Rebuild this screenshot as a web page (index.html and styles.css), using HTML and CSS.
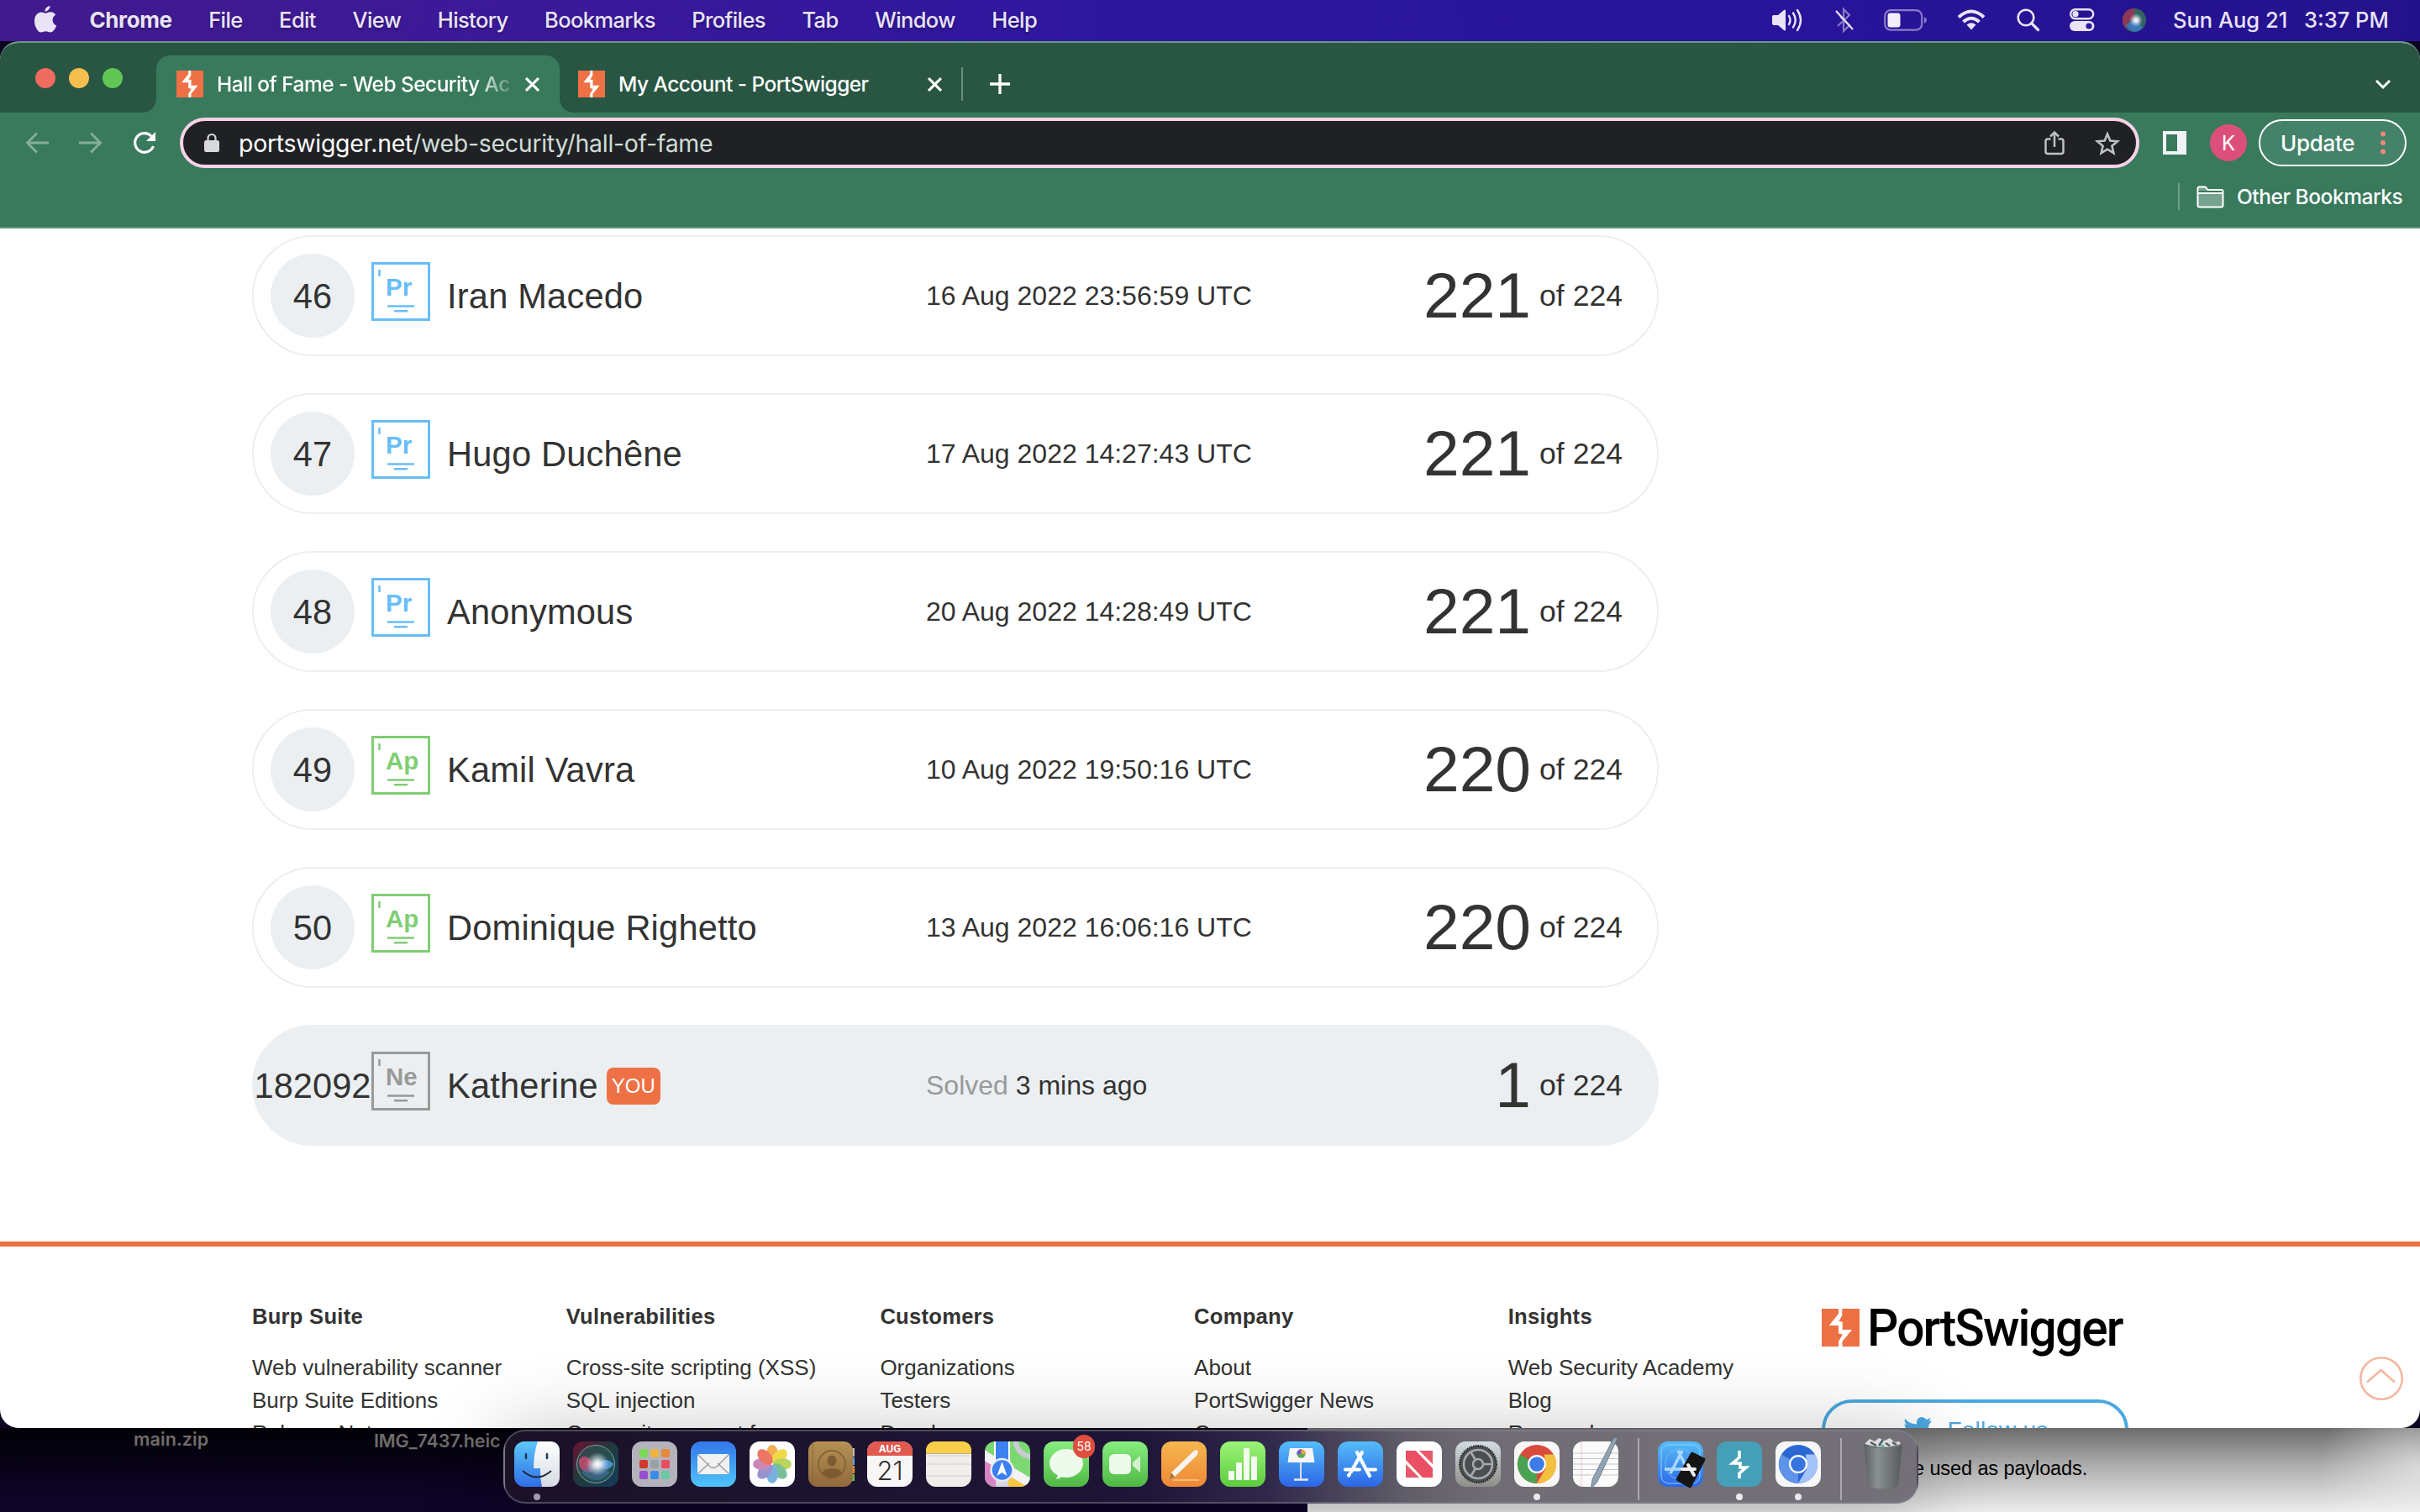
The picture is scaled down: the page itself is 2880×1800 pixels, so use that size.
FILE: index.html
```html
<!DOCTYPE html>
<html lang="en">
<head>
<meta charset="utf-8">
<title>Hall of Fame - Web Security Academy</title>
<link rel="stylesheet" href="styles.css">
</head>
<body>
<svg width="0" height="0" class="defs" aria-hidden="true">
  <defs>
    <symbol id="bolt" viewBox="0 0 45 45">
      <rect width="45" height="45" fill="#ee7045"/>
      <path fill="#fff" d="M20 0h4.300v8L20.300 15l4.400.5V25H36L24.500 39v6H20v-6l5-8.500-5-1V20H8.700L20 6z"/>
    </symbol>
    <symbol id="x" viewBox="0 0 16 16"><path d="M1 1l14 14M15 1L1 15" stroke="#fff" stroke-width="2.900" fill="none"/></symbol>
    <symbol id="lines" viewBox="0 0 70 70"><rect x="1.500" y="1.500" width="67" height="67" fill="none" stroke="currentColor" stroke-width="3"/><path d="M9.500 9v8" stroke="currentColor" stroke-width="2.500"/><path d="M19 52.500h32M27 58.300h16" stroke="currentColor" stroke-width="2.600"/></symbol>
    <linearGradient id="gBlue" x2="0" y2="1"><stop stop-color="#3476ea"/><stop offset="1" stop-color="#4fc4f8"/></linearGradient>
    <linearGradient id="gGreen" x2="0" y2="1"><stop stop-color="#86ee80"/><stop offset="1" stop-color="#50b945"/></linearGradient>
    <linearGradient id="gLime" x2="0" y2="1"><stop stop-color="#9af477"/><stop offset="1" stop-color="#5dcc3e"/></linearGradient>
    <linearGradient id="gOrange" x2="0" y2="1"><stop stop-color="#f6b64e"/><stop offset="1" stop-color="#ef8836"/></linearGradient>
    <linearGradient id="gSky" x2="0" y2="1"><stop stop-color="#55bdf9"/><stop offset="1" stop-color="#2c66e6"/></linearGradient>
    <linearGradient id="gFace" x2="0" y2="1"><stop stop-color="#5cc8f8"/><stop offset="1" stop-color="#2f6de8"/></linearGradient>
    <linearGradient id="gWhite" x2="0" y2="1"><stop stop-color="#fff"/><stop offset="1" stop-color="#d5dbe2"/></linearGradient>
    <linearGradient id="gTan" x2="0" y2="1"><stop stop-color="#b59154"/><stop offset="1" stop-color="#91693b"/></linearGradient>
    <linearGradient id="gSiri" x2="1" y2="1"><stop stop-color="#6b1230"/><stop offset=".5" stop-color="#1e3b3e"/><stop offset="1" stop-color="#123a5c"/></linearGradient>
    <linearGradient id="gGear" x2="0" y2="1"><stop stop-color="#d3dde3"/><stop offset="1" stop-color="#8f8d88"/></linearGradient>
    <linearGradient id="gBin" x2="1" y2="0"><stop stop-color="#5a5f61"/><stop offset=".35" stop-color="#8a9091"/><stop offset="1" stop-color="#55595b"/></linearGradient>
    <radialGradient id="gOrb"><stop stop-color="#fff"/><stop offset=".3" stop-color="#fff" stop-opacity=".8"/><stop offset="1" stop-color="#cfe3f8" stop-opacity="0"/></radialGradient>
  </defs>
</svg>

<header class="menubar">
  <nav class="menus">
    <svg class="apple" width="28" height="34" viewBox="0 0 28 34"><path fill="#e9e3f5" d="M19.500 1c.2 3.600-3 6.800-6 6.600C13.100 4.300 16.500 1.200 19.500 1zM14.200 9.700c1.600 0 3.200-1.500 5.900-1.500 2.300 0 4.700 1.200 6.200 3.300-5.500 3.200-4.600 10.900.9 13.100-1.200 3.300-4.100 7.900-7 7.900-2.200 0-3.200-1.300-5.800-1.300-2.700 0-3.800 1.300-5.900 1.300C5.300 32.500 1 25.700 1 19.200 1 12.300 5.300 8.500 9.200 8.500c2.200 0 3.700 1.200 5 1.200z"/></svg>
    <b>Chrome</b><span>File</span><span>Edit</span><span>View</span><span>History</span><span>Bookmarks</span><span>Profiles</span><span>Tab</span><span>Window</span><span>Help</span>
  </nav>
  <div class="status">
    <svg width="38" height="28" viewBox="0 0 38 28"><path fill="#e9e3f5" d="M1 10q0-2 2-2h5l7-6q2-1.500 2 1v22q0 2.500-2 1l-7-6H3q-2 0-2-2z"/><path d="M21 9q3 5 0 10M26 5.500q5.500 8.500 0 17M31 2q8 12 0 24" fill="none" stroke="#e9e3f5" stroke-width="2.400" stroke-linecap="round"/></svg>
    <svg class="bt" width="22" height="30" viewBox="0 0 22 30"><path d="M3 22l14-13-7-7v26l7-7L6 11" fill="none" stroke="#8a7bc8" stroke-width="2.200"/><path d="M1 4l20 22" stroke="#e9e3f5" stroke-width="2.200"/></svg>
    <svg class="batt" width="52" height="26" viewBox="0 0 52 26"><rect x="1.200" y="1.200" width="44" height="23.500" rx="7" fill="none" stroke="#8a7bc8" stroke-width="2.200"/><rect x="4.500" y="4.500" width="15" height="17" rx="3" fill="#f3effa"/><path d="M48 9q3 1.500 3 4t-3 4z" fill="#8a7bc8"/></svg>
    <svg class="wifi" width="34" height="25" viewBox="0 0 34 25"><path d="M2 9.500q15-14 30 0M7.500 15q9.500-8.500 19 0" fill="none" stroke="#e9e3f5" stroke-width="4"/><path d="M11.500 18.500q5.500-4.500 11 0L17 24.500z" fill="#e9e3f5"/></svg>
    <svg class="mag" width="27" height="27" viewBox="0 0 27 27"><circle cx="11" cy="11" r="9.300" fill="none" stroke="#e9e3f5" stroke-width="2.600"/><path d="M17.500 17.500l8 8" stroke="#e9e3f5" stroke-width="3.200" stroke-linecap="round"/></svg>
    <svg class="cc" width="30" height="27" viewBox="0 0 30 27"><rect x="1.200" y="1.200" width="27" height="11" rx="5.500" fill="none" stroke="#e9e3f5" stroke-width="2.400"/><circle cx="7" cy="6.700" r="3.600" fill="#e9e3f5"/><rect x="0" y="15" width="29.500" height="12" rx="6" fill="#e9e3f5"/><circle cx="23" cy="21" r="3.600" fill="#2a169c"/></svg>
    <svg class="siri" width="28" height="28" viewBox="0 0 28 28"><circle cx="14" cy="14" r="14" fill="#33635f"/><path d="M14 0A14 14 0 0 0 4 24q4-12 10-10z" fill="#8c3856"/><path d="M4 20q8-8 14-5l6 8Q13 34 4 20z" fill="#3c76b8"/><circle cx="16" cy="14" r="8" fill="url(#gOrb)"/></svg>
    <span class="date">Sun Aug 21</span><span class="time">3:37 PM</span>
  </div>
</header>

<main class="window">
  <div class="tabstrip">
    <div class="lights"><i class="red"></i><i class="yellow"></i><i class="green"></i></div>
    <div class="tab active"><svg class="fav"><use href="#bolt"/></svg><span class="title fade">Hall of Fame - Web Security Ac</span><svg class="close"><use href="#x"/></svg></div>
    <div class="tab"><svg class="fav"><use href="#bolt"/></svg><span class="title">My Account - PortSwigger</span><svg class="close"><use href="#x"/></svg></div>
    <i class="tabsep"></i>
    <svg class="plus" width="24" height="24" viewBox="0 0 24 24"><path d="M12 0v24M0 12h24" stroke="#fff" stroke-width="3.400"/></svg>
    <svg class="chev" width="20" height="12" viewBox="0 0 20 12"><path d="M2 2l8 8 8-8" fill="none" stroke="#fff" stroke-width="3"/></svg>
  </div>
  <div class="toolbar">
    <svg class="back" width="28" height="26" viewBox="0 0 28 26"><path d="M28 13H3M14 1.500L2.500 13 14 24.500" fill="none" stroke="#85ae9b" stroke-width="2.800"/></svg>
    <svg class="fwd" width="28" height="26" viewBox="0 0 28 26"><path d="M0 13h25M14 1.500L25.500 13 14 24.500" fill="none" stroke="#85ae9b" stroke-width="2.800"/></svg>
    <svg class="reload" width="28" height="28" viewBox="0 0 28 28"><path d="M24.500 18A11.300 11.300 0 1 1 22 6" fill="none" stroke="#fff" stroke-width="3.200"/><path d="M27 1v11H16z" fill="#fff"/></svg>
    <div class="omnibox">
      <svg class="lock" width="18" height="22" viewBox="0 0 18 22"><rect y="8" width="18" height="14" rx="2.500" fill="#d6d8da"/><path d="M4.500 9V5.500a4.500 4.500 0 0 1 9 0V9" fill="none" stroke="#d6d8da" stroke-width="2.200"/></svg>
      <span class="url">portswigger.net<em>/web-security/hall-of-fame</em></span>
      <svg class="share" width="24" height="30" viewBox="0 0 24 30"><path d="M7.500 10.500H4a2.500 2.500 0 0 0-2.500 2.500v12.500A2.500 2.500 0 0 0 4 28h16a2.500 2.500 0 0 0 2.500-2.500V13a2.500 2.500 0 0 0-2.500-2.500h-3.500M12 20V3M7 7.500l5-5 5 5" fill="none" stroke="#bdc1c0" stroke-width="2.500"/></svg>
      <svg class="star" width="30" height="29" viewBox="0 0 30 29"><path d="M15 3.500l3.300 8 8.700.7-6.600 5.600 2 8.400L15 21.700l-7.400 4.500 2-8.400L3 12.200l8.700-.7z" fill="none" stroke="#bdc1c0" stroke-width="2.600"/></svg>
    </div>
    <svg class="panel" width="28" height="28" viewBox="0 0 28 28"><rect x="2" y="2" width="24" height="24" fill="none" stroke="#eef3f5" stroke-width="4"/><rect x="17" width="11" height="28" fill="#eef3f5"/></svg>
    <span class="avatar">K</span>
    <span class="update"><span>Update</span><svg width="6" height="28" viewBox="0 0 6 28"><g fill="#ec8a78"><circle cx="3" cy="3.500" r="3"/><circle cx="3" cy="14" r="3"/><circle cx="3" cy="24.500" r="3"/></g></svg></span>
  </div>
  <div class="bookmarks">
    <i></i>
    <svg width="33" height="27" viewBox="0 0 33 27"><path d="M1.500 3.500q0-2 2-2h7l3 3.500h16q2 0 2 2v16.500q0 2-2 2h-26q-2 0-2-2z" fill="#75a38f" stroke="#fff" stroke-width="2"/><path d="M2.500 6h28v3h-28z" fill="#397a5d"/><path d="M1.500 9h30" stroke="#fff" stroke-width="2"/></svg>
    <span>Other Bookmarks</span>
  </div>

  <section class="page">
    <div class="rows">
      <article class="row"><span class="rank">46</span><span class="level pr"><svg><use href="#lines"/></svg><b>Pr</b></span><span class="name">Iran Macedo</span><span class="when">16 Aug 2022 23:56:59 UTC</span><span class="score">221</span><span class="of">of 224</span></article>
      <article class="row"><span class="rank">47</span><span class="level pr"><svg><use href="#lines"/></svg><b>Pr</b></span><span class="name">Hugo Duchêne</span><span class="when">17 Aug 2022 14:27:43 UTC</span><span class="score">221</span><span class="of">of 224</span></article>
      <article class="row"><span class="rank">48</span><span class="level pr"><svg><use href="#lines"/></svg><b>Pr</b></span><span class="name">Anonymous</span><span class="when">20 Aug 2022 14:28:49 UTC</span><span class="score">221</span><span class="of">of 224</span></article>
      <article class="row"><span class="rank">49</span><span class="level ap"><svg><use href="#lines"/></svg><b>Ap</b></span><span class="name">Kamil Vavra</span><span class="when">10 Aug 2022 19:50:16 UTC</span><span class="score">220</span><span class="of">of 224</span></article>
      <article class="row"><span class="rank">50</span><span class="level ap"><svg><use href="#lines"/></svg><b>Ap</b></span><span class="name">Dominique Righetto</span><span class="when">13 Aug 2022 16:06:16 UTC</span><span class="score">220</span><span class="of">of 224</span></article>
      <article class="row me"><span class="rank">182092</span><span class="level ne"><svg><use href="#lines"/></svg><b>Ne</b></span><span class="name">Katherine<mark>YOU</mark></span><span class="when"><em>Solved</em> 3 mins ago</span><span class="score">1</span><span class="of">of 224</span></article>
    </div>
    <footer class="footer">
      <div class="col"><h3>Burp Suite</h3><a>Web vulnerability scanner</a><a>Burp Suite Editions</a><a>Release Notes</a></div>
      <div class="col"><h3>Vulnerabilities</h3><a>Cross-site scripting (XSS)</a><a>SQL injection</a><a>Cross-site request forgery</a></div>
      <div class="col"><h3>Customers</h3><a>Organizations</a><a>Testers</a><a>Developers</a></div>
      <div class="col"><h3>Company</h3><a>About</a><a>PortSwigger News</a><a>Careers</a></div>
      <div class="col"><h3>Insights</h3><a>Web Security Academy</a><a>Blog</a><a>Research</a></div>
      <div class="brand">
        <div class="logo"><svg width="45" height="45"><use href="#bolt"/></svg><span>PortSwigger</span></div>
        <div class="follow"><svg width="33" height="28" viewBox="0 0 33 28"><path fill="#4aa8e0" d="M1 2q6 6.500 14 6.500C14-1 23-2 26.500 3L32 1l-2.500 4L33 4.500 29.500 9C29 26 11 31 0 24q6 0 9-3-5-1-6-5h3Q1 14 .5 8.500L3.500 9Q-.5 6 1 2z"/></svg><span>Follow us</span></div>
      </div>
    </footer>
    <svg class="top" width="52" height="52" viewBox="0 0 52 52"><circle cx="26" cy="26" r="24.700" fill="none" stroke="#f7b7a0" stroke-width="2.600"/><path d="M9 30.500L25.500 16 42 30.500" fill="none" stroke="#f7b7a0" stroke-width="2.800"/></svg>
  </section>
</main>

<section class="desktop">
  <div class="left"><span class="file1">main.zip</span><span class="file2">IMG_7437.heic</span></div>
  <div class="right"><span>e used as payloads.</span></div>
</section>

<nav class="dock">
  <span class="app on"><svg viewBox="0 0 54 54"><rect width="54" height="54" rx="12" fill="url(#gFace)"/><path d="M28 0h14q12 0 12 12v30q0 12-12 12h-9q-2-8-2-22h-8Q23 14 28 0z" fill="url(#gWhite)"/><path d="M14 15v5M39 15v5" stroke="#223f5c" stroke-width="2.600" stroke-linecap="round"/><path d="M10 35q17 15 34 0" fill="none" stroke="#1d2b3b" stroke-width="1.800"/></svg></span>
  <span class="app"><svg viewBox="0 0 54 54"><rect width="54" height="54" rx="12" fill="url(#gSiri)"/><circle cx="27" cy="27" r="22.500" fill="#2c5c5a" fill-opacity=".6" stroke="#7ba59b" stroke-width="1"/><path d="M7 22q8-10 16 4l6 2q-8 14-18 6-5-5-4-12z" fill="#d2496f" opacity=".8"/><path d="M29 27q10-10 19 0-9 13-19 0z" fill="#4f9de0" opacity=".85"/><path d="M10 37q18-22 34 0-16 18-34 0z" fill="#4876a8" opacity=".55"/><circle cx="29" cy="27" r="14" fill="url(#gOrb)"/></svg></span>
  <span class="app"><svg viewBox="0 0 54 54"><rect width="54" height="54" rx="12" fill="#b4b3bb"/><g><rect x="9" y="9" width="10" height="10" rx="2" fill="#78d957"/><rect x="22" y="9" width="10" height="10" rx="2" fill="#f0b33e"/><rect x="35" y="9" width="10" height="10" rx="2" fill="#e5883a"/><rect x="9" y="22" width="10" height="10" rx="2" fill="#cf3a30"/><rect x="22" y="22" width="10" height="10" rx="2" fill="#9aa1a6"/><rect x="35" y="22" width="10" height="10" rx="2" fill="#ea4d61"/><rect x="9" y="35" width="10" height="10" rx="2" fill="#9450cf"/><rect x="22" y="35" width="10" height="10" rx="2" fill="#3b8de9"/><rect x="35" y="35" width="10" height="10" rx="2" fill="#6bcaa4"/></g></svg></span>
  <span class="app"><svg viewBox="0 0 54 54"><rect width="54" height="54" rx="12" fill="url(#gBlue)"/><rect x="8" y="15" width="38" height="24" rx="2.500" fill="#f1f1f1"/><path d="M9 38l13-12M45 38L32 26M9 16l14 14q4 3 8 0l14-14" fill="none" stroke="#9a9a9a" stroke-width="1.300"/></svg></span>
  <span class="app"><svg viewBox="0 0 54 54"><rect width="54" height="54" rx="12" fill="#fdfdfd"/><g opacity=".88"><ellipse cx="27" cy="15" rx="7" ry="11" fill="#f2a33b"/><ellipse cx="27" cy="15" rx="7" ry="11" fill="#f0d32e" transform="rotate(45 27 27)"/><ellipse cx="27" cy="15" rx="7" ry="11" fill="#b0cf4a" transform="rotate(90 27 27)"/><ellipse cx="27" cy="15" rx="7" ry="11" fill="#69b98a" transform="rotate(135 27 27)"/><ellipse cx="27" cy="15" rx="7" ry="11" fill="#69a8dc" transform="rotate(180 27 27)"/><ellipse cx="27" cy="15" rx="7" ry="11" fill="#8a85c8" transform="rotate(225 27 27)"/><ellipse cx="27" cy="15" rx="7" ry="11" fill="#c379ae" transform="rotate(270 27 27)"/><ellipse cx="27" cy="15" rx="7" ry="11" fill="#ea6350" transform="rotate(315 27 27)"/></g></svg></span>
  <span class="app"><svg viewBox="0 0 54 54"><path d="M50 8h5v10h-5z" fill="#bbb"/><path d="M50 19h5v9h-5z" fill="#55a9e8"/><path d="M50 29h5v9h-5z" fill="#ef8e35"/><path d="M50 39h5v8h-5z" fill="#61c454"/><rect width="53" height="54" rx="11" fill="url(#gTan)"/><path d="M5 2v50" stroke="#8b6537" stroke-width="1"/><circle cx="28" cy="27" r="16" fill="none" stroke="#7d5b32" stroke-width="1.300"/><ellipse cx="28" cy="23" rx="5.500" ry="6.500" fill="#7d5b32"/><path d="M16 38q3-6 12-6t12 6q-5 6-12 6t-12-6z" fill="#7d5b32"/></svg></span>
  <span class="app cal"><b>AUG</b><span>21</span></span>
  <span class="app"><svg viewBox="0 0 54 54"><rect width="54" height="54" rx="12" fill="#f0eeea"/><path d="M0 14v-2Q0 0 12 0h30q12 0 12 12v2z" fill="#f8ce48"/><path d="M0 14.500h54" stroke="#b6b09e"/><path d="M2 17h50" stroke="#b8b4aa" stroke-dasharray="1 1"/><path d="M0 27h54M0 41h54" stroke="#cfccd2"/></svg></span>
  <span class="app"><svg viewBox="0 0 54 54"><clipPath id="cm"><rect width="54" height="54" rx="12"/></clipPath><g clip-path="url(#cm)"><path fill="#7cd873" d="M0 0h54v54H0z"/><path fill="#d883c4" d="M0 22l14 8v24H0z"/><path fill="#f3c743" d="M28 40l26 14H28z"/><path d="M-3 15L58 52" stroke="#f3f3f5" stroke-width="11"/><path d="M13 24h15v30H13z" fill="#d7d7de"/><path d="M13 0h15v30H13z" fill="#3c82f0"/><path d="M12 0v30M29 0v30" stroke="#fff" stroke-width="2"/><path d="M36-3q2 20 22 22" stroke="#c9cbd4" stroke-width="6" fill="none"/><circle cx="20.500" cy="34" r="13" fill="#3b80ee" stroke="#e8ebf0" stroke-width="2.500"/><path d="M20.500 24l6 17-6-4-6 4z" fill="#fff"/></g></svg></span>
  <span class="app"><svg viewBox="0 0 54 54"><rect width="54" height="54" rx="12" fill="url(#gGreen)"/><path d="M27 9c11 0 20 7.500 20 17S38 43 27 43q-3 0-6-.8-2 2.800-6.500 2.300 2.500-2 2-4.500C10.500 37 7 32 7 26 7 16.500 16 9 27 9z" fill="#eefaec"/></svg><i class="count">58</i></span>
  <span class="app"><svg viewBox="0 0 54 54"><rect width="54" height="54" rx="12" fill="url(#gGreen)"/><rect x="8" y="15" width="26" height="24" rx="6" fill="#eefaec"/><path d="M36 25l9-8v20l-9-8z" fill="#d5efcf"/></svg></span>
  <span class="app"><svg viewBox="0 0 54 54"><rect width="54" height="54" rx="12" fill="url(#gOrange)"/><path d="M9 46l3-9 27-26q4-2 5 1-1 4-2 5L16 42z" fill="#f7f5f2"/><path d="M9 46l7-4-4-5z" fill="#a8762f"/><path d="M14 46h31" stroke="#fbd9a8" stroke-width="1.200"/></svg></span>
  <span class="app"><svg viewBox="0 0 54 54"><rect width="54" height="54" rx="12" fill="url(#gLime)"/><g fill="#f4fdf0"><rect x="10" y="35" width="7" height="11" rx="1"/><rect x="19" y="25" width="7" height="21" rx="1"/><rect x="28" y="8" width="7" height="38" rx="1"/><rect x="37" y="18" width="7" height="28" rx="1"/></g></svg></span>
  <span class="app"><svg viewBox="0 0 54 54"><rect width="54" height="54" rx="12" fill="url(#gSky)"/><path d="M13 8h27l2.500 17h-32z" fill="#f6f6f8"/><path d="M26 24v21" stroke="#dfe3ea" stroke-width="2"/><path d="M18 45.500h17" stroke="#e8ebf0" stroke-width="2.500"/><circle cx="26.500" cy="14.500" r="5.200" fill="#5daa5a"/><path d="M26.500 14.500V9.300a5.200 5.200 0 0 1 5 6.500z" fill="#eaa63a"/><path d="M26.500 14.500V9.300a5.200 5.200 0 0 0-5 6.500z" fill="#7d4fd0"/></svg></span>
  <span class="app"><svg viewBox="0 0 54 54"><rect width="54" height="54" rx="12" fill="url(#gSky)"/><path d="M29 13L16 36M23 13l15 28M9 33.500h17M34 33.500h11M13 40.500l1-1.500" stroke="#fff" stroke-width="4.200" stroke-linecap="round"/></svg></span>
  <span class="app"><svg viewBox="0 0 54 54"><rect width="54" height="54" rx="12" fill="#fff"/><path d="M11 11h12l20 21v11H31L11 22z" fill="#ea4f63"/><path d="M27 11h16v16zM11 27v16h16z" fill="#e95a6c"/></svg></span>
  <span class="app"><svg viewBox="0 0 54 54"><rect width="54" height="54" rx="12" fill="url(#gGear)"/><circle cx="27" cy="27" r="22" fill="#4b4e50" stroke="#222" stroke-width="2" stroke-dasharray="1.500 1.200"/><circle cx="27" cy="27" r="17" fill="none" stroke="#a7aaab" stroke-width="2.600"/><path d="M27 27h17M27 27l-9-15M27 27l-9 15" stroke="#a7aaab" stroke-width="2.600"/><circle cx="27" cy="27" r="6" fill="#4b4e50" stroke="#a7aaab" stroke-width="2.500"/></svg></span>
  <span class="app on"><svg viewBox="0 0 54 54"><rect width="54" height="54" rx="12" fill="#f7f7f7"/><circle cx="27" cy="27" r="23" fill="#d94b3d"/><path d="M7 15.500L27 27l0 23A23 23 0 0 1 7 15.500z" fill="#4ba253"/><path d="M27 50l10-17-1-17.500h11A23 23 0 0 1 27 50z" fill="#f3bf3f"/><circle cx="27" cy="27" r="11" fill="#fff"/><circle cx="27" cy="27" r="8.800" fill="#3f7be8"/></svg></span>
  <span class="app"><svg viewBox="0 0 54 54"><rect width="54" height="54" rx="12" fill="#fbfbfb"/><path d="M0 14h54M0 20.500h54M0 27h54M0 33.500h54M0 40h54" stroke="#c5c5c8" stroke-width="1.200"/><path d="M10 0v54" stroke="#efc2c2"/><path d="M49-5l4 1-24 52-8 9 2-12z" fill="#8fa3b3" stroke="#5f6f7c" stroke-width=".8"/></svg></span>
  <i class="sep"></i>
  <span class="app"><svg viewBox="0 0 54 54"><rect width="54" height="54" rx="12" fill="url(#gSky)"/><rect x="4" y="4" width="46" height="46" rx="9" fill="none" stroke="#8fd0fb"/><circle cx="27" cy="27" r="18" fill="none" stroke="#76bdf5"/><path d="M29 11L15 38M24 11l14 28M8 33h26" stroke="#a9d9fb" stroke-width="3.500"/><path d="M42 13l14 7q1 1 0 3L40 54q-1 2-3 1l-14-8q-2-1-1-3l17-30q1-2 3-1z" fill="#151515"/><path d="M29 33h15M36 28l7 12" stroke="#eee" stroke-width="4" stroke-linecap="round"/></svg></span>
  <span class="app on"><svg viewBox="0 0 54 54"><rect width="54" height="54" rx="12" fill="#459fb6"/><path d="M27 11v8l-8 7h9v5h7l-8 7v6" fill="none" stroke="#fff" stroke-width="3.600"/></svg></span>
  <span class="app on"><svg viewBox="0 0 54 54"><rect width="54" height="54" rx="12" fill="#f7f7f7"/><circle cx="27" cy="27" r="23" fill="#2c68d4"/><path d="M7 15.500L27 27v23A23 23 0 0 1 7 15.500z" fill="#5f93ea"/><path d="M27 50l10-17-1-17.500h11A23 23 0 0 1 27 50z" fill="#a5c3f6"/><circle cx="27" cy="27" r="11" fill="#fff"/><circle cx="27" cy="27" r="8.800" fill="#3674df"/></svg></span>
  <i class="sep"></i>
  <span class="app"><svg viewBox="0 0 54 54"><path d="M4 2h46l-5 51q-18 7-36 0z" fill="url(#gBin)"/><path d="M5 3l6-6 6 3 5-4 7 3 6-3 6 5 5-1 3 4q-20 8-44-1z" fill="#dcdddc"/><path d="M12 1l7 4M27-2l-5 7M38 1l5 3M30 2l5 3" stroke="#4d5d60" stroke-width="2.500"/><path d="M24 4l4 2" stroke="#48b7a8" stroke-width="2.500"/><path d="M4 3q22 9 46 0" fill="none" stroke="#6b7274" stroke-width="1.500"/></svg></span>
</nav>
</body>
</html>
```
FILE: styles.css
```css
* { box-sizing: border-box; }
body {
  margin: 0; width: 2880px; height: 1800px; overflow: hidden; position: relative;
  background: #0c0420; color: #333332;
  font-family: "Liberation Sans", Arial, sans-serif;
  display: flex; flex-direction: column;
}
svg { display: block; flex: none; overflow: visible; }
i, em { font-style: normal; }
.defs { position: absolute; }

/* menu bar */
.menubar {
  height: 49px; flex: none; display: flex; justify-content: space-between; align-items: center;
  padding: 0 38px 2px 40px; color: #e9e3f5; white-space: nowrap;
  font: 500 25.500px Inter, sans-serif;
  background: linear-gradient(90deg, #421a8e 0, #3a199a 24%, #2c169f 48%, #27149a 75%, #24128c 100%);
}
.menus { display: flex; align-items: center; gap: 43.500px; text-shadow: 0 2px 3px rgba(0,0,0,.3); }
.menus span { letter-spacing: -.6px; }
.menus .apple { margin-right: -5px; margin-top: -2px; }
.menus b { font-weight: 700; font-size: 26px; letter-spacing: -.4px; }
.status { display: flex; align-items: center; }
.bt { margin-left: 38px; } .batt { margin-left: 36px; } .wifi { margin-left: 35px; }
.mag { margin-left: 37px; } .cc { margin-left: 36px; } .siri { margin-left: 33px; }
.date { margin-left: 32px; width: 138px; } .time { margin-left: 18px; width: 100px; }

/* browser window */
.window {
  height: 1651px; flex: none; position: relative; z-index: 1; display: flex; flex-direction: column;
  border-radius: 22px; overflow: hidden; background: #fff; border-top: 2px solid #6f9583;
  font-family: Inter, sans-serif;
}
.tabstrip {
  height: 83px; flex: none; display: flex; align-items: center; color: #fff;
  background: #285642; padding: 15px 34px 0 42px;
}
.lights { display: flex; gap: 16px; margin-right: 40px; margin-top: -14px; }
.lights i { width: 24px; height: 24px; border-radius: 50%; }
.red { background: #ed6b5f; } .yellow { background: #f5bf50; } .green { background: #62c655; }
.tab { height: 68px; width: 478px; display: flex; align-items: center; padding: 0 23px 0 22px; }
.tab.active { width: 480px; padding: 0 24px; background: #397a5d; border-radius: 16px 16px 0 0; position: relative; }
.tab.active::before, .tab.active::after { content: ""; position: absolute; bottom: 0; width: 16px; height: 16px; }
.tab.active::before { left: -16px; background: radial-gradient(circle at 0 0, transparent 15.500px, #397a5d 16px); }
.tab.active::after { right: -16px; background: radial-gradient(circle at 100% 0, transparent 15.500px, #397a5d 16px); }
.fav { width: 32px; height: 32px; }
.close { width: 17px; height: 17px; margin-left: auto; }
.title { margin-left: 16px; font-size: 24.500px; font-weight: 500; white-space: nowrap; letter-spacing: -.55px; }
.fade { width: 352px; overflow: hidden; -webkit-mask-image: linear-gradient(90deg, #000 308px, transparent 358px); mask-image: linear-gradient(90deg, #000 308px, transparent 358px); }
.tabsep { width: 2px; height: 40px; background: #6c8f80; }
.plus { margin-left: 32px; }
.chev { margin-left: auto; }
.toolbar {
  height: 72px; flex: none; display: flex; align-items: center; background: #397a5d;
  padding: 0 16px 0 30px;
}
.fwd { margin-left: 36px; } .reload { margin-left: 36px; }
.omnibox {
  width: 2332px; height: 60px; margin-left: 28px; border: 4px solid #f8d1e8; border-radius: 30px;
  background: #202124; display: flex; align-items: center; padding: 0 19px 0 25px;
}
.url { margin-left: 23px; font-size: 28.500px; letter-spacing: -.3px; color: #fff; white-space: nowrap; flex: 1; }
.url em { color: #cfdcd6; }
.star { margin-left: 36px; }
.panel { margin-left: 28px; }
.avatar {
  width: 44px; height: 44px; border-radius: 50%; margin-left: 28px; background: #dc4f7b; color: #fff;
  display: grid; place-items: center; font-size: 24px;
}
.update {
  width: 176px; height: 56px; margin-left: 14px; border: 2px solid #fff; border-radius: 28px;
  background: #44826a; color: #fff; display: flex; align-items: center; justify-content: space-between;
  padding: 0 23px 0 24px; font-size: 26px; font-weight: 500; letter-spacing: -.3px;
}
.bookmarks {
  height: 66px; flex: none; background: #397a5d; border-bottom: 2px solid #5c917a; color: #fff;
  display: flex; align-items: center; justify-content: flex-end; padding: 0 22px 8px 0;
  font-size: 24.500px; font-weight: 500; letter-spacing: -.45px;
}
.bookmarks i { width: 2px; height: 32px; background: #6ea08b; margin-right: 20px; }
.bookmarks span { margin-left: 15px; width: 196px; white-space: nowrap; }

/* leaderboard */
.page { flex: 1; min-height: 0; position: relative; overflow: hidden; font-family: "Liberation Sans", Arial, sans-serif; }
.rows { margin: 8px 0 0 300px; width: 1674px; display: flex; flex-direction: column; gap: 44px; }
.row {
  height: 144px; border: 2px solid #ebeff2; border-radius: 72px; display: flex; align-items: center;
  padding-right: 41px; white-space: nowrap;
}
.rank {
  width: 100px; height: 100px; margin: 0 20px; border-radius: 50%; background: #ebeff2; font-size: 41.600px;
  display: flex; align-items: center; justify-content: center; flex: none; padding-top: 1px;
}
.level { position: relative; width: 70px; height: 70px; margin-top: -10px; flex: none; }
.level svg { width: 70px; height: 70px; }
.level b { position: absolute; left: 17px; top: 13px; font-size: 29.500px; line-height: 34px; }
.pr { color: #68bdf8; } .ap { color: #80ce73; } .ne { color: #999998; }
.name { width: 570px; margin-left: 20px; font-size: 41.600px; letter-spacing: .2px; padding-top: 1px; display: flex; align-items: center; flex: none; }
.name mark {
  margin-left: 10px; width: 64px; height: 44px; border-radius: 8px; background: #ee7045; color: #fff;
  font-size: 24px; letter-spacing: 0; display: grid; place-items: center;
}
.when { flex: 1; font-size: 32px; }
.when em { color: #999; }
.score { font-size: 76.800px; line-height: 100px; margin-right: 10px; padding-bottom: 2px; }
.of { font-size: 35.600px; }
.me { background: #ebeff2; }

/* footer */
.footer { margin-top: 114px; border-top: 6px solid #ee7045; padding: 68px 0 0 300px; display: flex; }
.col { width: 373.700px; display: flex; flex-direction: column; font-size: 26px; line-height: 39px; white-space: nowrap; flex: none; }
.col h3 { font-size: 25.600px; line-height: 30px; margin: 0 0 27px; letter-spacing: .25px; }
.brand { width: 365px; }
.logo { display: flex; height: 45px; margin-top: 6px; align-items: center; }
.logo span {
  margin-left: 9px; font: 500 62px/45px Roboto, sans-serif; letter-spacing: -2px; color: #000;
  transform: scaleX(.945); transform-origin: 0 50%;
}
.follow {
  margin-top: 63px; height: 90px; border: 4px solid #4aa8e0; border-radius: 36px; color: #4aa8e0;
  display: flex; justify-content: center; padding: 17px 0 0 2px; font-size: 28px; gap: 18px; letter-spacing: .2px;
}
.follow span { line-height: 32px; }
.top { position: absolute; right: 20px; bottom: 33px; }

/* desktop below the window */
.desktop { flex: 1; display: flex; color: #6f6d6b; }
.left {
  width: 1556px; display: flex; font: 600 21.500px Inter, sans-serif; letter-spacing: .1px; padding-left: 159px;
  background: linear-gradient(#020106, #0e0428 85%);
}
.file1 { width: 286px; } .file2 { padding-top: 2px; letter-spacing: -.1px; }
.right {
  flex: 1; color: #000; font-size: 23.500px; padding: 35px 0 0 721px; letter-spacing: -.1px;
  background: radial-gradient(ellipse 120px 110px at 100% 50%, rgba(245,245,245,.6), transparent), linear-gradient(#6c6c6c, #aeaeae 45%, #ededed);
}

/* dock */
.dock {
  position: absolute; z-index: 2; left: 599px; top: 1702px; width: 1684px; height: 88px;
  display: flex; gap: 16px; padding: 12px 0 0 11px; border: 2px solid rgba(140,135,150,.45); border-radius: 26px;
  background: linear-gradient(90deg, #1b1228 0, #1e1537 45%, #30284a 54%, #615e69 64%, #706d75 70%, #737078 100%);
  box-shadow: 0 10px 90px 10px rgba(0,0,0,.22);
}
.app { position: relative; width: 54px; height: 54px; flex: none; }
.app svg { width: 54px; height: 54px; }
.on::after {
  content: ""; position: absolute; left: 23px; top: 62px; width: 8px; height: 8px; border-radius: 50%; background: #ece9ef;
}
.app.on:first-child::after { background: #a59bb0; }
.cal { border-radius: 12px; overflow: hidden; background: #f8f7f6; color: #333; text-align: center; font-family: Inter, sans-serif; }
.cal b { display: block; height: 17px; line-height: 18px; font-size: 12px; color: #fff; background: #e15a50; }
.cal span { display: block; font-size: 31px; line-height: 36px; font-weight: 300; }
.count {
  position: absolute; right: -7px; top: -8px; width: 26px; height: 28px; border-radius: 14px; background: #e04e3d;
  color: #fff; font: 14px/28px Inter, sans-serif; text-align: center;
}
.sep { width: 2px; height: 74px; margin: -4px 6px 0 7px; background: #aaa7ae; flex: none; }
```
